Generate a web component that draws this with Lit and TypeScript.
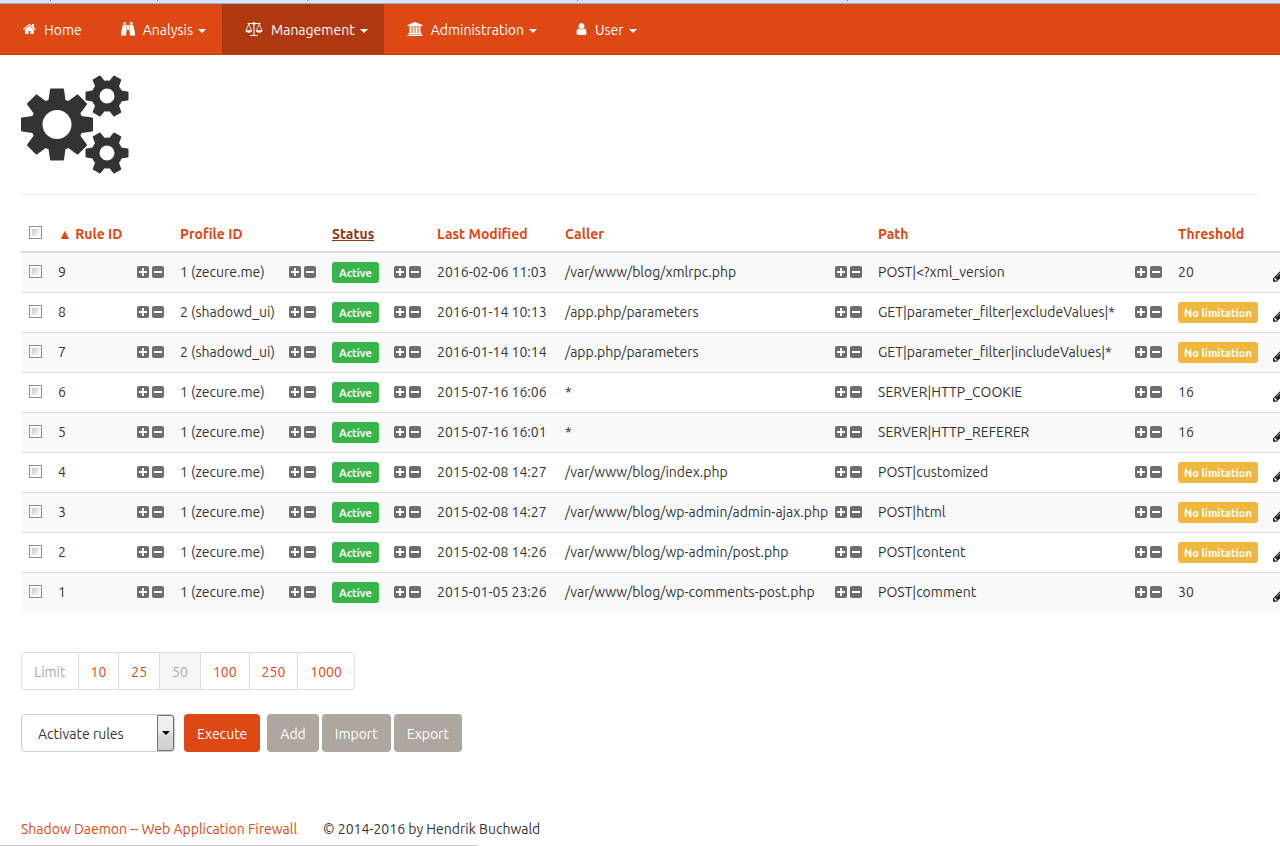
import { LitElement, html, svg, css, nothing } from "lit";
import { customElement } from "lit/decorators.js";

interface Rule {
  id: number;
  profile: string;
  modified: string;
  caller: string;
  path: string;
  threshold?: number;
}

const RULES: Rule[] = [
  { id: 9, profile: "1 (zecure.me)", modified: "2016-02-06 11:03", caller: "/var/www/blog/xmlrpc.php", path: "POST|<?xml_version", threshold: 20 },
  { id: 8, profile: "2 (shadowd_ui)", modified: "2016-01-14 10:13", caller: "/app.php/parameters", path: "GET|parameter_filter|excludeValues|*" },
  { id: 7, profile: "2 (shadowd_ui)", modified: "2016-01-14 10:14", caller: "/app.php/parameters", path: "GET|parameter_filter|includeValues|*" },
  { id: 6, profile: "1 (zecure.me)", modified: "2015-07-16 16:06", caller: "*", path: "SERVER|HTTP_COOKIE", threshold: 16 },
  { id: 5, profile: "1 (zecure.me)", modified: "2015-07-16 16:01", caller: "*", path: "SERVER|HTTP_REFERER", threshold: 16 },
  { id: 4, profile: "1 (zecure.me)", modified: "2015-02-08 14:27", caller: "/var/www/blog/index.php", path: "POST|customized" },
  { id: 3, profile: "1 (zecure.me)", modified: "2015-02-08 14:27", caller: "/var/www/blog/wp-admin/admin-ajax.php", path: "POST|html" },
  { id: 2, profile: "1 (zecure.me)", modified: "2015-02-08 14:26", caller: "/var/www/blog/wp-admin/post.php", path: "POST|content" },
  { id: 1, profile: "1 (zecure.me)", modified: "2015-01-05 23:26", caller: "/var/www/blog/wp-comments-post.php", path: "POST|comment", threshold: 30 },
];

const LIMITS = [10, 25, 50, 100, 250, 1000];
const CURRENT_LIMIT = 50;

/** Outline of a gear with `teeth` tapered teeth and a round hole. */
function gear(cx: number, cy: number, teeth: number, tip: number, body: number, hole: number, tipHalf: number, baseHalf: number): string {
  const at = (angle: number, along: number, across: number) => {
    const x = cx + along * Math.cos(angle) - across * Math.sin(angle);
    const y = cy + along * Math.sin(angle) + across * Math.cos(angle);
    return `${x.toFixed(2)} ${y.toFixed(2)}`;
  };
  const along = Math.sqrt(body * body - baseHalf * baseHalf);
  let d = "";
  for (let i = 0; i < teeth; i++) {
    const a = (i * 2 * Math.PI) / teeth;
    d += i === 0 ? `M${at(a, along, -baseHalf)}` : `A${body} ${body} 0 0 1 ${at(a, along, -baseHalf)}`;
    d += `L${at(a, tip - 1, -tipHalf)}Q${at(a, tip, -tipHalf)} ${at(a, tip, 1 - tipHalf)}`;
    d += `L${at(a, tip, tipHalf - 1)}Q${at(a, tip, tipHalf)} ${at(a, tip - 1, tipHalf)}L${at(a, along, baseHalf)}`;
  }
  d += `A${body} ${body} 0 0 1 ${at(0, along, -baseHalf)}Z`;
  d += `M${cx - hole} ${cy}a${hole} ${hole} 0 1 0 ${2 * hole} 0a${hole} ${hole} 0 1 0 ${-2 * hole} 0Z`;
  return d;
}

const homeIcon = html`<svg class="icon" width="13" height="14" viewBox="64 0 1664 1792" aria-hidden="true"><path d="M1472 992v480q0 26-19 45t-45 19h-384v-384h-256v384h-384q-26 0-45-19t-19-45v-480q0-1 .5-3t.5-3l575-474 575 474q1 2 1 6zm223-69l-62 74q-8 9-21 11h-3q-13 0-21-7l-692-577-692 577q-12 8-24 7-13-2-21-11l-62-74q-8-10-7-23.500t11-21.500l719-599q32-26 76-26t76 26l244 204v-195q0-14 9-23t23-9h192q14 0 23 9t9 23v408l219 182q10 8 11 21.500t-7 23.500z"/></svg>`;

const binocularsIcon = html`<svg class="icon" width="14" height="14" viewBox="0 0 14 14" aria-hidden="true"><path d="M2.2 0.2h2.9v1.6H2.2zM8.9 0.2h2.9v1.6H8.9zM2 2.4h3.6v7H5.2v4.2H0v-3.4zM8.400 2.400H12L14 10.200v3.400H8.800V9.400H8.400zM6.100 3h1.800v5H6.100z"/></svg>`;

const scaleIcon = html`<svg class="icon" width="18" height="14" viewBox="0 0 18 14" aria-hidden="true"><path fill="none" stroke="currentColor" d="M2.500 1.500h13M9 2v11M5 13.500h8"/><path fill="none" stroke="currentColor" stroke-width=".8" d="M3.800 2L1 8.500M3.800 2l2.800 6.500M14.200 2l-2.800 6.500M14.200 2L17 8.500"/><path d="M0.400 8.300h6.800q-.4 2.400-3.400 2.400T.4 8.300zM10.800 8.300h6.800q-.4 2.400-3.400 2.400t-3.400-2.400z"/><circle cx="9" cy="1.500" r="1.500"/></svg>`;

const institutionIcon = html`<svg class="icon" width="16" height="14" viewBox="0 0 16 14" aria-hidden="true"><path d="M8 0l7.500 3v1h-1q0 .5-.5.5H2q-.5 0-.5-.5h-1V3zM2.500 5h2v6h1V5h2v6h1V5h2v6h1V5h2v6h.5q.5 0 .5.500v.5h-13v-.5q0-.5.500-.5h.5zM1 12.400h14q.500 0 .500.500V14H.500v-1.100q0-.5.500-.5z"/></svg>`;

const userIcon = html`<svg class="icon" width="11" height="14" viewBox="192 0 1408 1792" aria-hidden="true"><path d="M1536 1399q0 109-62.500 187t-150.500 78h-854q-88 0-150.500-78t-62.500-187q0-85 8.500-160.500t31.500-152 58.500-131 94-89 134.500-34.500q131 128 313 128t313-128q76 0 134.500 34.500t94 89 58.500 131 31.500 152 8.500 160.500zm-256-887q0 159-112.500 271.500t-271.500 112.500-271.500-112.500-112.500-271.500 112.500-271.500 271.500-112.500 271.500 112.500 112.500 271.500z"/></svg>`;

const pencilIcon = html`<svg class="icon" width="16" height="16" viewBox="128 0 1792 1792" aria-hidden="true"><path d="M491 1536l91-91-235-235-91 91v107h128v128h107zm523-928q0-22-22-22-10 0-17 7l-542 542q-7 7-7 17 0 22 22 22 10 0 17-7l542-542q7-7 7-17zm-54-192l416 416-832 832h-416v-416zm683 96q0 53-37 90l-166 166-416-416 166-165q36-38 90-38 53 0 91 38l235 234q37 39 37 91z"/></svg>`;

const NAV = [
  { label: "Home", icon: homeIcon, menu: false, active: false },
  { label: "Analysis", icon: binocularsIcon, menu: true, active: false },
  { label: "Management", icon: scaleIcon, menu: true, active: true },
  { label: "Administration", icon: institutionIcon, menu: true, active: false },
  { label: "User", icon: userIcon, menu: true, active: false },
];

@customElement("rule-filter")
export class RuleFilter extends LitElement {
  static styles = css`
    :host {
      display: flex;
      gap: 3px;
    }
    .toggle {
      display: block;
      width: 12px;
      height: 12px;
      padding: 0;
      border: 0;
      background: none;
      color: #6e6e6e;
      cursor: pointer;
    }
    .glyph {
      display: block;
      fill: currentColor;
    }
  `;

  private square(sign: unknown) {
    return html`<svg class="glyph" width="12" height="12" viewBox="0 0 12 12" aria-hidden="true"><rect width="12" height="12" rx="2"/>${sign}</svg>`;
  }

  render() {
    return html`
      <button class="toggle" aria-label="Include">${this.square(svg`<path fill="#fff" d="M5 2h2v3h3v2H7v3H5V7H2V5h3z"/>`)}</button>
      <button class="toggle" aria-label="Exclude">${this.square(svg`<path fill="#fff" d="M2 5h8v2H2z"/>`)}</button>
    `;
  }
}

@customElement("app-root")
export class AppRoot extends LitElement {
  static styles = css`
    :host {
      display: block;
      overflow: hidden;
      background: #fff;
      color: #333;
      font: 14px/20px Ubuntu, "Open Sans", "Noto Sans", sans-serif;
    }
    a {
      color: #dd4814;
      text-decoration: none;
    }
    button,
    select {
      font: inherit;
    }
    .icon {
      display: block;
      flex: none;
      fill: currentColor;
    }

    .chrome {
      display: flex;
      height: 3px;
      background: #d7e5f5;
      border-bottom: 1px solid #93aed4;
    }
    .tick {
      box-sizing: border-box;
      height: 1px;
      border-right: 1px solid #6d7a8c;
    }

    .navbar {
      display: flex;
      background: #dd4814;
      border-bottom: 1px solid #bf3e11;
    }
    .nav-link {
      display: flex;
      align-items: center;
      height: 50px;
      padding: 0 16px 0 23px;
      color: #fff;
    }
    .nav-link.active {
      background: #ae3910;
    }
    .nav-label {
      margin-left: 8px;
      padding-top: 1px;
    }
    .caret {
      margin: 4px 0 0 5px;
      border: 4px solid transparent;
      border-top-color: currentColor;
      border-bottom: 0;
    }

    .main {
      padding: 20px 20px 0 21px;
    }
    .gears {
      display: block;
      fill: #333;
    }
    .rule {
      height: 0;
      margin: 20px 0;
      border: 0;
      border-top: 1px solid #eee;
    }

    .rules {
      table-layout: fixed;
      width: 1320px;
      border-spacing: 0;
    }
    .c-check { width: 29px; }
    .c-id { width: 79px; }
    .c-filter { width: 43px; }
    .c-profile { width: 109px; }
    .c-status { width: 62px; }
    .c-modified { width: 128px; }
    .c-caller { width: 270px; }
    .c-path { width: 257px; }
    .c-threshold { width: 95px; }
    .rules th,
    .rules td {
      text-align: left;
      white-space: nowrap;
    }
    .rules th {
      height: 34px;
      padding: 2px 8px 0;
      border-bottom: 2px solid #ddd;
    }
    .rules td {
      height: 38px;
      padding: 0 8px 1px;
      border-bottom: 1px solid #ddd;
    }
    .rules tbody tr:nth-child(odd) {
      background: #f9f9f9;
    }
    .rules tbody tr:last-child td {
      border-bottom-color: #f9f9f9;
    }
    .rules .current {
      color: #97310e;
      text-decoration: underline;
    }
    .check {
      display: block;
      appearance: none;
      box-sizing: border-box;
      width: 13px;
      height: 13px;
      margin: 0 0 1px;
      border: 1px solid #8e8f8f;
      background: linear-gradient(135deg, #c4c9ce, #f6f6f6) content-box #f4f4f4;
      padding: 2px;
    }
    .rules thead .check {
      margin-bottom: 3px;
    }
    .check:checked {
      background: #555 content-box;
    }
    .badge {
      display: block;
      width: max-content;
      padding: 1px 7px 0;
      border-radius: 3px;
      background: #38b44a;
      color: #fff;
      font-size: 11px;
      font-weight: 600;
      line-height: 20px;
    }
    .badge.none {
      padding: 1px 6px 0;
      background: #efb73e;
    }
    .edit {
      display: block;
      padding-top: 6px;
      color: #222;
    }

    .pages {
      display: flex;
      width: max-content;
      margin: 39px 0 24px;
      padding: 0;
      list-style: none;
    }
    .page {
      display: block;
      padding: 9px 12px 7px;
      border: 1px solid #ddd;
      border-left-width: 0;
    }
    .page.title {
      border-left-width: 1px;
      border-radius: 4px 0 0 4px;
      color: #aea79f;
    }
    .page.on {
      background: #f5f5f5;
      color: #aea79f;
    }
    .pages li:last-child .page {
      border-radius: 0 4px 4px 0;
    }

    .actions {
      display: flex;
      gap: 3px;
    }
    .picker {
      position: relative;
      margin-right: 6px;
    }
    .select {
      appearance: none;
      display: block;
      width: 154px;
      height: 38px;
      padding: 2px 24px 0 16px;
      border: 1px solid #ccc;
      border-radius: 4px;
      background: #fff;
      color: #333;
    }
    .drop {
      position: absolute;
      top: 1px;
      right: 1px;
      display: flex;
      align-items: center;
      justify-content: center;
      box-sizing: border-box;
      width: 17px;
      height: 36px;
      border: 1px solid #707070;
      border-radius: 0 3px 3px 0;
      background: linear-gradient(#f3f3f3, #ebebeb 50%, #dcdcdc 50%, #cecece);
      pointer-events: none;
    }
    .drop::after {
      content: "";
      border: 4px solid transparent;
      border-top-color: #000;
      border-bottom: 0;
    }
    .btn {
      height: 38px;
      padding: 2px 13px 0;
      border: 0;
      border-radius: 4px;
      background: #aea79f;
      color: #fff;
      cursor: pointer;
    }
    .btn.primary {
      margin-right: 4px;
      background: #dd4814;
    }

    .footer {
      display: flex;
      gap: 26px;
      padding: 67px 21px 7px;
    }
    .status-edge {
      position: fixed;
      bottom: 0;
      left: 0;
      width: 477px;
      border-top: 1px solid #c4c4c4;
    }
    .t1 { width: 51px; }
    .t2 { width: 107px; }
    .t3 { width: 150px; }
    .t4 { width: 270px; }
  `;

  private renderRule(r: Rule) {
    return html`
      <tr>
        <td><input class="check" type="checkbox" aria-label="Select rule ${r.id}" /></td>
        <td>${r.id}</td>
        <td><rule-filter></rule-filter></td>
        <td>${r.profile}</td>
        <td><rule-filter></rule-filter></td>
        <td><span class="badge">Active</span></td>
        <td><rule-filter></rule-filter></td>
        <td>${r.modified}</td>
        <td>${r.caller}</td>
        <td><rule-filter></rule-filter></td>
        <td>${r.path}</td>
        <td><rule-filter></rule-filter></td>
        <td>${r.threshold ?? html`<span class="badge none">No limitation</span>`}</td>
        <td><a class="edit" href="#" aria-label="Edit rule ${r.id}">${pencilIcon}</a></td>
      </tr>
    `;
  }

  render() {
    return html`
      <div class="chrome">
        <span class="tick t1"></span><span class="tick t2"></span><span class="tick t3"></span><span class="tick t4"></span><span class="tick t4"></span>
      </div>
      <nav class="navbar">
        ${NAV.map(
          (n) => html`<a class="nav-link ${n.active ? "active" : ""}" href="#">${n.icon}<span class="nav-label">${n.label}</span>${n.menu ? html`<span class="caret"></span>` : nothing}</a>`,
        )}
      </nav>
      <main class="main">
        <svg class="gears" width="108" height="99" viewBox="0 0 108 99" fill-rule="evenodd" aria-hidden="true">
          <path d=${gear(36, 49.5, 8, 36, 26, 14.5, 7, 8.500)} />
          <path d=${gear(86, 21, 6, 21.500, 15.500, 7.500, 4.500, 5.500)} />
          <path d=${gear(86, 78, 6, 21.500, 15.500, 7.500, 4.500, 5.500)} />
        </svg>
        <hr class="rule" />
        <table class="rules">
          <colgroup>
            <col class="c-check" /><col class="c-id" /><col class="c-filter" /><col class="c-profile" /><col class="c-filter" />
            <col class="c-status" /><col class="c-filter" /><col class="c-modified" /><col class="c-caller" /><col class="c-filter" />
            <col class="c-path" /><col class="c-filter" /><col class="c-threshold" /><col />
          </colgroup>
          <thead>
            <tr>
              <th><input class="check" type="checkbox" aria-label="Select all rules" /></th>
              <th colspan="2"><a href="#">▲ Rule ID</a></th>
              <th colspan="2"><a href="#">Profile ID</a></th>
              <th colspan="2"><a class="current" href="#">Status</a></th>
              <th><a href="#">Last Modified</a></th>
              <th colspan="2"><a href="#">Caller</a></th>
              <th colspan="2"><a href="#">Path</a></th>
              <th><a href="#">Threshold</a></th>
              <th></th>
            </tr>
          </thead>
          <tbody>
            ${RULES.map((r) => this.renderRule(r))}
          </tbody>
        </table>
        <ul class="pages">
          <li><span class="page title">Limit</span></li>
          ${LIMITS.map((n) => html`<li><a class="page ${n === CURRENT_LIMIT ? "on" : ""}" href="#">${n}</a></li>`)}
        </ul>
        <div class="actions">
          <div class="picker">
            <select class="select" aria-label="Action">
              <option>Activate rules</option>
            </select>
            <span class="drop"></span>
          </div>
          <button class="btn primary">Execute</button>
          <button class="btn">Add</button>
          <button class="btn">Import</button>
          <button class="btn">Export</button>
        </div>
      </main>
      <footer class="footer">
        <a href="#">Shadow Daemon -- Web Application Firewall</a>
        <span>© 2014-2016 by Hendrik Buchwald</span>
      </footer>
      <div class="status-edge"></div>
    `;
  }
}
